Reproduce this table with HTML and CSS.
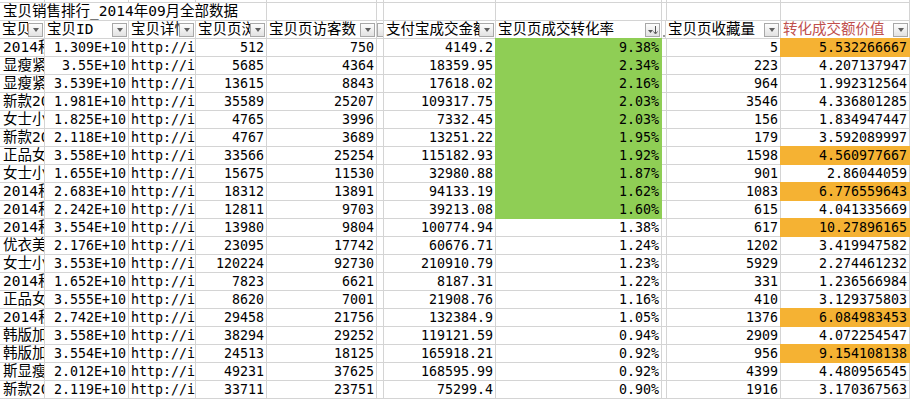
FILE: index.html
```html
<!DOCTYPE html>
<html lang="zh-CN">
<head>
<meta charset="utf-8">
<title>宝贝销售排行</title>
<link rel="stylesheet" href="styles.css">
</head>
<body>
<div class="sheet">
  <div class="c top"></div><div class="c top"></div><div class="c top"></div><div class="c top"></div><div class="c top"></div><div class="c top"></div><div class="c top"></div><div class="c top"></div><div class="c top"></div><div class="c top"></div><div class="c top"></div>

  <div class="c title">宝贝销售排行_2014年09月全部数据</div>
  <div class="c"></div><div class="c"></div><div class="c"></div><div class="c"></div><div class="c"></div><div class="c"></div><div class="c"></div>

  <div class="c h"><span class="t">宝贝名称</span><span class="btn"></span></div>
  <div class="c h"><span class="t">宝贝ID</span><span class="btn"></span></div>
  <div class="c h"><span class="t">宝贝详情</span><span class="btn"></span></div>
  <div class="c h"><span class="t">宝贝页浏览量</span><span class="btn"></span></div>
  <div class="c h"><span class="t">宝贝页访客数</span><span class="btn"></span></div>
  <div class="c hn1"><span class="pbtn"></span></div>
  <div class="c h"><span class="t">支付宝成交金额</span><span class="btn"></span></div>
  <div class="c h"><span class="t">宝贝页成交转化率</span><span class="btn sort"><svg width="13" height="12" viewBox="0 0 13 12"><path d="M2 6h5l-2.5 3z" fill="#555"/><path d="M9.5 2v7" stroke="#555" stroke-width="1"/><path d="M7.5 7.5l2 2.5 2-2.5" fill="none" stroke="#555" stroke-width="1"/></svg></span></div>
  <div class="c hn2"><span class="dot"></span></div>
  <div class="c h"><span class="t">宝贝页收藏量</span><span class="btn"></span></div>
  <div class="c h red"><span class="t">转化成交额价值</span><span class="btn"></span></div>

  <div class="c a">2014秋冬新款</div><div class="c r">1.309E+10</div><div class="c">http://item.taobao.com</div><div class="c r">512</div><div class="c r">750</div><div class="c"></div><div class="c r">4149.2</div><div class="c r green">9.38%</div><div class="c"></div><div class="c r">5</div><div class="c r orange">5.532266667</div>
  <div class="c a">显瘦紧身</div><div class="c r">3.55E+10</div><div class="c">http://item.taobao.com</div><div class="c r">5685</div><div class="c r">4364</div><div class="c"></div><div class="c r">18359.95</div><div class="c r green">2.34%</div><div class="c"></div><div class="c r">223</div><div class="c r">4.207137947</div>
  <div class="c a">显瘦紧身</div><div class="c r">3.539E+10</div><div class="c">http://item.taobao.com</div><div class="c r">13615</div><div class="c r">8843</div><div class="c"></div><div class="c r">17618.02</div><div class="c r green">2.16%</div><div class="c"></div><div class="c r">964</div><div class="c r">1.992312564</div>
  <div class="c a">新款2014</div><div class="c r">1.981E+10</div><div class="c">http://item.taobao.com</div><div class="c r">35589</div><div class="c r">25207</div><div class="c"></div><div class="c r">109317.75</div><div class="c r green">2.03%</div><div class="c"></div><div class="c r">3546</div><div class="c r">4.336801285</div>
  <div class="c a">女士小脚</div><div class="c r">1.825E+10</div><div class="c">http://item.taobao.com</div><div class="c r">4765</div><div class="c r">3996</div><div class="c"></div><div class="c r">7332.45</div><div class="c r green">2.03%</div><div class="c"></div><div class="c r">156</div><div class="c r">1.834947447</div>
  <div class="c a">新款2014</div><div class="c r">2.118E+10</div><div class="c">http://item.taobao.com</div><div class="c r">4767</div><div class="c r">3689</div><div class="c"></div><div class="c r">13251.22</div><div class="c r green">1.95%</div><div class="c"></div><div class="c r">179</div><div class="c r">3.592089997</div>
  <div class="c a">正品女装</div><div class="c r">3.558E+10</div><div class="c">http://item.taobao.com</div><div class="c r">33566</div><div class="c r">25254</div><div class="c"></div><div class="c r">115182.93</div><div class="c r green">1.92%</div><div class="c"></div><div class="c r">1598</div><div class="c r orange">4.560977667</div>
  <div class="c a">女士小脚</div><div class="c r">1.655E+10</div><div class="c">http://item.taobao.com</div><div class="c r">15675</div><div class="c r">11530</div><div class="c"></div><div class="c r">32980.88</div><div class="c r green">1.87%</div><div class="c"></div><div class="c r">901</div><div class="c r">2.86044059</div>
  <div class="c a">2014秋冬新款</div><div class="c r">2.683E+10</div><div class="c">http://item.taobao.com</div><div class="c r">18312</div><div class="c r">13891</div><div class="c"></div><div class="c r">94133.19</div><div class="c r green">1.62%</div><div class="c"></div><div class="c r">1083</div><div class="c r orange">6.776559643</div>
  <div class="c a">2014秋冬新款</div><div class="c r">2.242E+10</div><div class="c">http://item.taobao.com</div><div class="c r">12811</div><div class="c r">9703</div><div class="c"></div><div class="c r">39213.08</div><div class="c r green">1.60%</div><div class="c"></div><div class="c r">615</div><div class="c r">4.041335669</div>
  <div class="c a">2014秋冬新款</div><div class="c r">3.554E+10</div><div class="c">http://item.taobao.com</div><div class="c r">13980</div><div class="c r">9804</div><div class="c"></div><div class="c r">100774.94</div><div class="c r">1.38%</div><div class="c"></div><div class="c r">617</div><div class="c r orange">10.27896165</div>
  <div class="c a">优衣美女装</div><div class="c r">2.176E+10</div><div class="c">http://item.taobao.com</div><div class="c r">23095</div><div class="c r">17742</div><div class="c"></div><div class="c r">60676.71</div><div class="c r">1.24%</div><div class="c"></div><div class="c r">1202</div><div class="c r">3.419947582</div>
  <div class="c a">女士小脚</div><div class="c r">3.553E+10</div><div class="c">http://item.taobao.com</div><div class="c r">120224</div><div class="c r">92730</div><div class="c"></div><div class="c r">210910.79</div><div class="c r">1.23%</div><div class="c"></div><div class="c r">5929</div><div class="c r">2.274461232</div>
  <div class="c a">2014秋冬新款</div><div class="c r">1.652E+10</div><div class="c">http://item.taobao.com</div><div class="c r">7823</div><div class="c r">6621</div><div class="c"></div><div class="c r">8187.31</div><div class="c r">1.22%</div><div class="c"></div><div class="c r">331</div><div class="c r">1.236566984</div>
  <div class="c a">正品女装</div><div class="c r">3.555E+10</div><div class="c">http://item.taobao.com</div><div class="c r">8620</div><div class="c r">7001</div><div class="c"></div><div class="c r">21908.76</div><div class="c r">1.16%</div><div class="c"></div><div class="c r">410</div><div class="c r">3.129375803</div>
  <div class="c a">2014秋冬新款</div><div class="c r">2.742E+10</div><div class="c">http://item.taobao.com</div><div class="c r">29458</div><div class="c r">21756</div><div class="c"></div><div class="c r">132384.9</div><div class="c r">1.05%</div><div class="c"></div><div class="c r">1376</div><div class="c r orange">6.084983453</div>
  <div class="c a">韩版加绒</div><div class="c r">3.558E+10</div><div class="c">http://item.taobao.com</div><div class="c r">38294</div><div class="c r">29252</div><div class="c"></div><div class="c r">119121.59</div><div class="c r">0.94%</div><div class="c"></div><div class="c r">2909</div><div class="c r">4.072254547</div>
  <div class="c a">韩版加绒</div><div class="c r">3.554E+10</div><div class="c">http://item.taobao.com</div><div class="c r">24513</div><div class="c r">18125</div><div class="c"></div><div class="c r">165918.21</div><div class="c r">0.92%</div><div class="c"></div><div class="c r">956</div><div class="c r orange">9.154108138</div>
  <div class="c a">斯显瘦裤</div><div class="c r">2.012E+10</div><div class="c">http://item.taobao.com</div><div class="c r">49231</div><div class="c r">37625</div><div class="c"></div><div class="c r">168595.99</div><div class="c r">0.92%</div><div class="c"></div><div class="c r">4399</div><div class="c r">4.480956545</div>
  <div class="c a">新款2014</div><div class="c r">2.119E+10</div><div class="c">http://item.taobao.com</div><div class="c r">33711</div><div class="c r">23751</div><div class="c"></div><div class="c r">75299.4</div><div class="c r">0.90%</div><div class="c"></div><div class="c r">1916</div><div class="c r">3.170367563</div>
</div>
</body>
</html>
```
FILE: styles.css
```css
* { box-sizing: border-box; margin: 0; padding: 0; }
html, body { background: #fff; }
body { margin: 0; overflow: hidden; }

.sheet {
  display: grid;
  grid-template-columns: 45px 84px 67px 71px 110px 7px 112px 166px 4px 115px 129px;
  grid-template-rows: 3px;
  grid-auto-rows: 18px;
  width: 911px;
  font-family: "DejaVu Sans Mono", "Noto Sans CJK SC", monospace;
  font-size: 13.3px;
  color: #000;
}

.c {
  border-right: 1px solid #d4d4d4;
  border-bottom: 1px solid #d4d4d4;
  overflow: hidden;
  white-space: nowrap;
  line-height: 17px;
  padding: 0 2px;
}
.r { text-align: right; }
.a { font-size: 14.5px; padding-left: 3px; }
.title { grid-column: span 4; font-size: 14.5px; padding-left: 3px; overflow: visible; }

.green {
  background: #8fce55;
  border-color: #8fce55;
  box-shadow: -1px 0 0 #8fce55, 0 -1px 0 #8fce55, -1px -1px 0 #8fce55;
}
.orange {
  background: #f5b233;
  border-color: #f5b233;
  box-shadow: -1px 0 0 #f5b233, 0 -1px 0 #f5b233, -1px -1px 0 #f5b233;
}

.h {
  display: flex;
  align-items: center;
  padding: 0 1px 0 2px;
  font-size: 14.5px;
}
.h .t { flex: 1; min-width: 0; overflow: hidden; }
.red { color: #c0504d; }

.btn {
  flex: none;
  width: 15px;
  height: 14px;
  border: 1px solid #a8a8a8;
  background: linear-gradient(#fdfdfd, #e2e2e2);
  display: flex;
  align-items: center;
  justify-content: center;
}
.btn::after {
  content: "";
  border-left: 3.5px solid transparent;
  border-right: 3.5px solid transparent;
  border-top: 4px solid #606060;
  margin-top: 1px;
}
.btn.sort::after { display: none; }

.hn1 { padding: 0; display: flex; align-items: center; }
.pbtn {
  width: 6px;
  height: 14px;
  border: 1px solid #a8a8a8;
  border-right: none;
  background: linear-gradient(#fdfdfd, #e2e2e2);
}
.hn2 { padding: 0; display: flex; align-items: flex-end; }
.dot { width: 2px; height: 2px; background: #9a9a9a; margin: 0 0 1px 1px; }
```
